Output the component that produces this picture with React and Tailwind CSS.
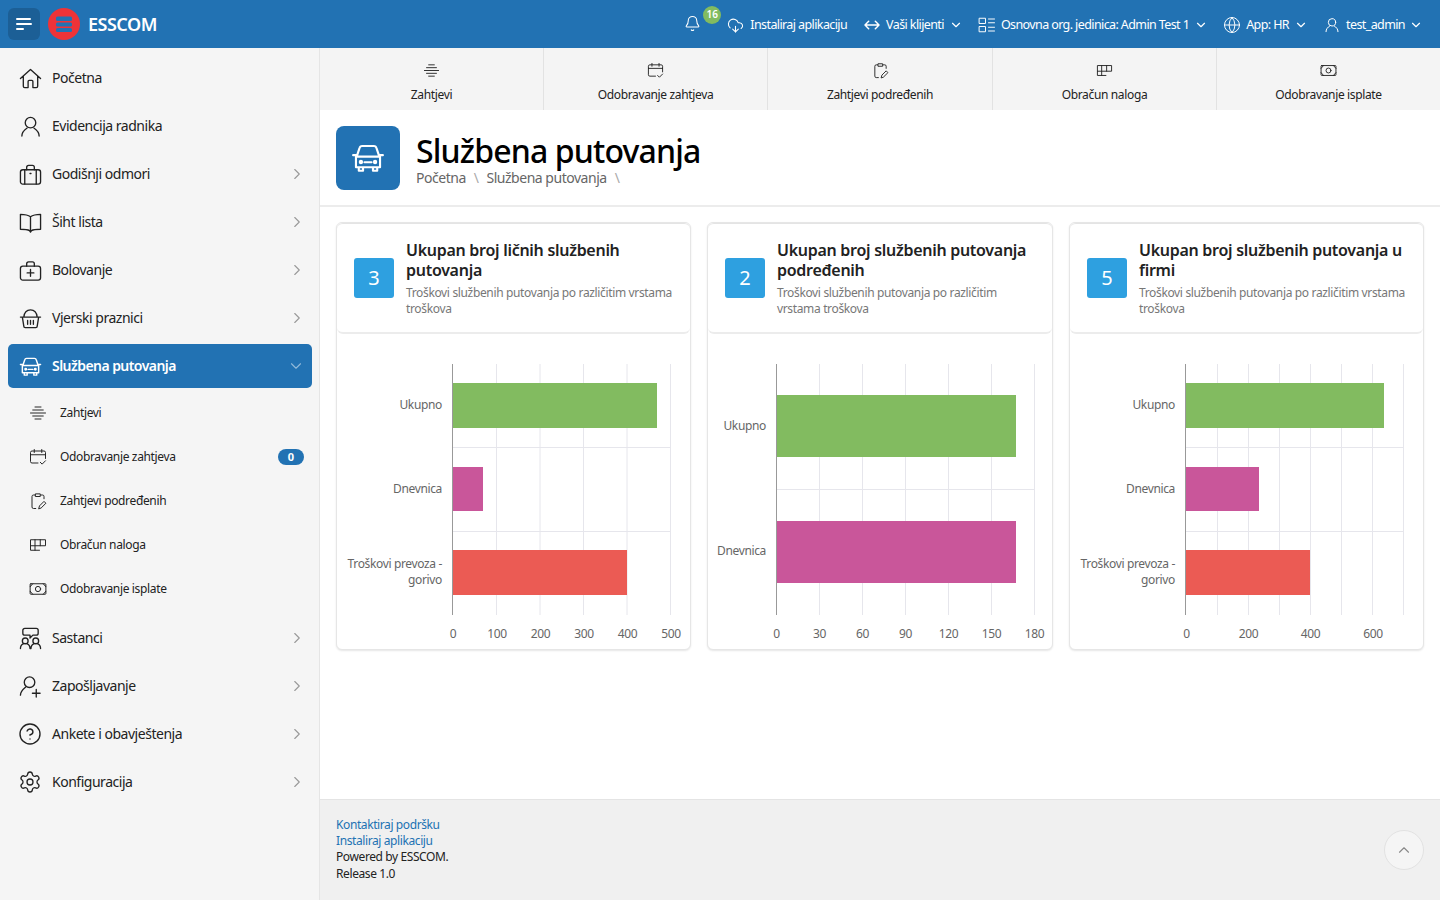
import { Bell, ChevronRight, ChevronDown, ChevronUp, CloudDownload, Globe, CircleHelp, Settings } from 'lucide-react'

const FONT = 'font-["Noto_Sans","Open_Sans",sans-serif]'

// Thin line icons drawn by hand, the packages don't have these shapes
function Ico({ size = 20, sw = 1.5, className = '', children }) {
  return (
    <svg width={size} height={size} viewBox="0 0 24 24" fill="none" stroke="currentColor" strokeWidth={sw}
      strokeLinecap="round" strokeLinejoin="round" className={`shrink-0 ${className}`}>
      {children}
    </svg>
  )
}

const HomeIcon = p => <Ico {...p}><path d="M1.500 12 12 2.500 22.500 12M4.500 9.500V20a1.500 1.500 0 0 0 1.500 1.500h3.500V15a1 1 0 0 1 1-1h3a1 1 0 0 1 1 1v6.500H18a1.500 1.500 0 0 0 1.500-1.500V9.500" /></Ico>
const UserIcon = p => <Ico {...p}><circle cx="12" cy="8" r="5.500" /><path d="M3 22c0-4 2.500-6.500 5.500-8.500M21 22c0-4-2.500-6.500-5.500-8.500" /></Ico>
const BagIcon = p => <Ico {...p}><rect x="1.500" y="7" width="21" height="15" rx="2.500" /><path d="M6 7v15M18 7v15M8 7V4.500A2 2 0 0 1 10 2.500h4a2 2 0 0 1 2 2V7M11.500 11h1" /></Ico>
const BookIcon = p => <Ico {...p}><path d="M12 6C10 4.500 6.500 3.500 1.500 3.500V19c4.500 0 8 .5 9.500 1.500l1 1.500 1-1.500c1.500-1 5-1.500 9.500-1.500V3.500C17.500 3.500 14 4.500 12 6ZM12 6v15" /></Ico>
const MedicalIcon = p => <Ico {...p}><rect x="1.500" y="7.500" width="21" height="14.500" rx="2.500" /><path d="M8 7.500V5a2 2 0 0 1 2-2h4a2 2 0 0 1 2 2v2.500M12 11v7M8.500 14.500h7" /></Ico>
const BasketIcon = p => <Ico {...p}><path d="M1.500 10.500h21M3.500 10.500 5 20a1.500 1.500 0 0 0 1.500 1.500h11A1.500 1.500 0 0 0 19 20l1.500-9.500M5 10.500C5.500 6 8 3 12 3s6.500 3 7 7.500M9 14v4M12 14v4M15 14v4" /></Ico>
const CarIcon = p => <Ico {...p}><path d="M4 11 6 5a2 2 0 0 1 2-1.500h8A2 2 0 0 1 18 5l2 6M1.500 10h2.500M20 10h2.500M3.500 11h17v7.500h-17zM5.500 18.500V21h3v-2.500M15.500 18.500V21h3v-2.500M9.500 15h5" /><circle cx="7" cy="14.800" r=".8" /><circle cx="17" cy="14.800" r=".8" /></Ico>
const LinesIcon = p => <Ico {...p}><path d="M8 4h8M5 8h14M2 12h20M5 16h14M8 20h8" /></Ico>
const CalCheckIcon = p => <Ico {...p}><path d="M12 20H4a2 2 0 0 1-2-2V6a2 2 0 0 1 2-2h16a2 2 0 0 1 2 2v8M2 9h20M7 2v4M17 2v4M15 19l2.500 2.500L22 17" /></Ico>
const ClipEditIcon = p => <Ico {...p}><path d="M8 4H6a2 2 0 0 0-2 2v14a2 2 0 0 0 2 2h3M16 4h2a2 2 0 0 1 2 2v3M9 2.500h6V6H9zM13 22l1-3.500 6-6 2.500 2.500-6 6z" /></Ico>
const TableIcon = p => <Ico {...p}><path d="M14 19H2V5h20v8H2M8 5v14M15 5v8" /></Ico>
const CashIcon = p => <Ico {...p}><rect x="1.500" y="5" width="21" height="14" rx="1" /><circle cx="12" cy="12" r="3.500" /><path d="M1.500 9 5 5M22.500 9 19 5M1.500 15 5 19M22.500 15 19 19" /></Ico>
const MeetingIcon = p => <Ico {...p}><path d="M6 1.500h12a2 2 0 0 1 2 2v3a2 2 0 0 1-2 2h-3.500L11.500 11.500V8.500H6a2 2 0 0 1-2-2v-3a2 2 0 0 1 2-2Z" /><circle cx="6.500" cy="14.500" r="3" /><circle cx="17.500" cy="14.500" r="3" /><path d="M1.500 22.500c0-2.500 1.500-4.500 3-5M11.500 22.500c0-2.500-1.500-4.500-3-5M12.500 22.500c0-2.500 1.500-4.500 3-5M22.500 22.500c0-2.500-1.500-4.500-3-5" /></Ico>
const UserPlusIcon = p => <Ico {...p}><circle cx="11" cy="7.500" r="5.500" /><path d="M1.500 21c0-3.500 2.500-6 5.500-8.500M18 15v8M14 19h8" /></Ico>
const TwoWayIcon = p => <Ico {...p}><path d="M2 12h20M7 6.500 1.500 12 7 17.500M17 6.500l5.500 5.500-5.500 5.500" /></Ico>
const OrgIcon = p => <Ico {...p}><path d="M2 3h8v7H2zM2 14h8v7H2zM14 4h8M14 9h8M14 15h8M14 20h8" /></Ico>

function CircleHelpIcon() {
  return <CircleHelp size={24} strokeWidth={1.4} className="shrink-0" />
}

function SettingsIcon() {
  return <Settings size={24} strokeWidth={1.3} className="shrink-0" />
}

const menu = [
  { label: 'Početna', icon: HomeIcon },
  { label: 'Evidencija radnika', icon: UserIcon },
  { label: 'Godišnji odmori', icon: BagIcon, more: true },
  { label: 'Šiht lista', icon: BookIcon, more: true },
  { label: 'Bolovanje', icon: MedicalIcon, more: true },
  { label: 'Vjerski praznici', icon: BasketIcon, more: true },
]

const menuBottom = [
  { label: 'Sastanci', icon: MeetingIcon, more: true },
  { label: 'Zapošljavanje', icon: UserPlusIcon, more: true },
  { label: 'Ankete i obavještenja', icon: CircleHelpIcon, more: true },
  { label: 'Konfiguracija', icon: SettingsIcon, more: true },
]

const subMenu = [
  { label: 'Zahtjevi', icon: LinesIcon },
  { label: 'Odobravanje zahtjeva', icon: CalCheckIcon, badge: 0 },
  { label: 'Zahtjevi podređenih', icon: ClipEditIcon },
  { label: 'Obračun naloga', icon: TableIcon },
  { label: 'Odobravanje isplate', icon: CashIcon },
]

const GREEN = '#82bb60'
const PINK = '#c9569a'
const RED = '#eb5b54'

const charts = [
  {
    count: 3,
    title: 'Ukupan broj ličnih službenih putovanja',
    sub: 'Troškovi službenih putovanja po različitim vrstama troškova',
    left: 337,
    width: 355,
    axis: 452.5,
    grid: [496.5, 540, 583.5, 627, 670.5],
    ticks: [[453, '0'], [497, '100'], [540.5, '200'], [584, '300'], [627.5, '400'], [671, '500']],
    rows: [447.5, 531.5],
    bars: [[383, 45, 657, GREEN], [467, 44, 483, PINK], [550, 45, 627, RED]],
    labels: [[['Ukupno'], 405], [['Dnevnica'], 489], [['Troškovi prevoza -', 'gorivo'], 564]],
  },
  {
    count: 2,
    title: 'Ukupan broj službenih putovanja podređenih',
    sub: 'Troškovi službenih putovanja po različitim vrstama troškova',
    left: 708,
    width: 346,
    axis: 776.5,
    grid: [819.5, 862.5, 905.5, 948.5, 991.5, 1034.5],
    ticks: [[776.5, '0'], [819.5, '30'], [862.5, '60'], [905.5, '90'], [948.5, '120'], [991.5, '150'], [1034.5, '180']],
    rows: [489.5],
    bars: [[395, 62, 1016, GREEN], [521, 62, 1016, PINK]],
    labels: [[['Ukupno'], 426], [['Dnevnica'], 551]],
  },
  {
    count: 5,
    title: 'Ukupan broj službenih putovanja u firmi',
    sub: 'Troškovi službenih putovanja po različitim vrstama troškova',
    left: 1070,
    width: 355,
    axis: 1185.5,
    grid: [1217.5, 1248.5, 1279.5, 1310.5, 1341.5, 1372.5, 1403.5],
    ticks: [[1186.5, '0'], [1248.5, '200'], [1310.5, '400'], [1373, '600']],
    rows: [447.5, 531.5],
    bars: [[383, 45, 1384, GREEN], [467, 44, 1259, PINK], [550, 45, 1310, RED]],
    labels: [[['Ukupno'], 405], [['Dnevnica'], 489], [['Troškovi prevoza -', 'gorivo'], 564]],
  },
]

function Chart({ c }) {
  // coordinates below are page numbers, viewBox shifts them into the card
  const labelX = c.axis - 10.5
  return (
    <svg width={c.width - 2} height={315} viewBox={`${c.left} 334 ${c.width - 2} 315`} className="block">
      {c.grid.map(x => <line key={x} x1={x} x2={x} y1={364} y2={615} stroke="#e6e6ec" />)}
      {c.rows.map(y => <line key={y} x1={c.axis} x2={c.grid[c.grid.length - 1]} y1={y} y2={y} stroke="#e6e6ec" />)}
      {c.bars.map(([y, h, x2, color]) => <rect key={y} x={c.axis} y={y} width={x2 - c.axis} height={h} fill={color} />)}
      <line x1={c.axis} x2={c.axis} y1={364} y2={615} stroke="#999" />
      {c.labels.map(([lines, y]) => lines.map((t, i) => (
        <text key={t} x={labelX} y={y + i * 16 + 4} textAnchor="end" fill="#666" fontSize="12" letterSpacing="-0.35">{t}</text>
      )))}
      {c.ticks.map(([x, t]) => (
        <text key={t} x={x} y={638} textAnchor="middle" fill="#666" fontSize="12" letterSpacing="-0.3">{t}</text>
      ))}
    </svg>
  )
}

function StatCard({ c }) {
  return (
    <div className="flex flex-col h-[428px] rounded-md border border-[#e6e6e6] shadow-[0_1px_2px_rgba(0,0,0,0.1)] bg-white">
      <div className="flex items-center gap-3 h-[111px] pl-[17px] pr-[15px] rounded-md border-t border-[#e4e4e4] border-b-2 border-b-[#ececec]">
        <div className="w-10 h-10 shrink-0 rounded-[3px] bg-[#2ea0e0] text-white text-xl flex items-center justify-center">{c.count}</div>
        <div className="min-w-0 pt-[1px]">
          <div className="text-base font-semibold leading-5 text-[#222] tracking-[-0.28px]">{c.title}</div>
          <div className="mt-[5px] text-xs leading-4 text-[#777] tracking-[-0.35px]">{c.sub}</div>
        </div>
      </div>
      <Chart c={c} />
    </div>
  )
}

function SideRow({ item }) {
  const Icon = item.icon
  return (
    <div className="flex items-center h-12 pl-5 pr-[13px] text-[#222] text-sm tracking-[-0.48px]">
      <span className="w-5 flex justify-center"><Icon size={23} sw={1.4} /></span>
      <span className="ml-3 flex-1">{item.label}</span>
      {item.more && <ChevronRight size={18} strokeWidth={1.5} className="text-[#999]" />}
    </div>
  )
}

export default function App() {
  return (
    <div className={`${FONT} w-[1440px] h-[900px] overflow-hidden flex flex-col bg-white`}>
      {/* Top bar */}
      <header className="h-12 shrink-0 bg-[#2272b3] text-white flex items-center pl-2 pr-[17px]">
        <button className="w-8 h-8 rounded-md bg-[#1c5f96] flex flex-col justify-center gap-[2.5px] pl-2">
          <span className="block w-[15px] h-[2.5px] rounded bg-white" />
          <span className="block w-4 h-[2.5px] rounded bg-white" />
          <span className="block w-2 h-[2.5px] rounded bg-white" />
        </button>
        <svg width="32" height="32" viewBox="0 0 32 32" className="ml-2 shrink-0">
          <circle cx="16" cy="16" r="16" fill="#ee3338" />
          <rect x="8" y="8.500" width="16" height="4.500" rx="1.500" fill="#2272b3" />
          <rect x="8" y="14.500" width="16" height="4" rx="1.500" fill="#2272b3" />
          <rect x="8" y="20" width="16" height="4" rx="1.500" fill="#2272b3" />
        </svg>
        <span className="ml-2 text-lg font-semibold tracking-[-0.5px]">ESSCOM</span>

        <div className="ml-auto flex items-center pt-[2px] text-[12.5px] tracking-[-0.6px]">
          <div className="relative mr-[26px] -mt-[4px]">
            <Bell size={17} strokeWidth={1.5} />
            <span className="absolute -top-[9px] left-[19px] w-[18px] h-[18px] rounded-full bg-[#82bb60] text-[10px] font-semibold tracking-normal flex items-center justify-center">16</span>
          </div>
          <CloudDownload size={17} strokeWidth={1.5} />
          <span className="ml-[6px]">Instaliraj aplikaciju</span>
          <TwoWayIcon size={16} sw={2.2} className="ml-[17px]" />
          <span className="ml-[6px]">Vaši klijenti</span>
          <ChevronDown size={14} strokeWidth={2} className="ml-[5px]" />
          <OrgIcon size={18} sw={1.3} className="ml-[15px]" />
          <span className="ml-[5px]">Osnovna org. jedinica: Admin Test 1</span>
          <ChevronDown size={14} strokeWidth={2} className="ml-[5px]" />
          <Globe size={18} strokeWidth={1.3} className="ml-[15px]" />
          <span className="ml-[5px]">App: HR</span>
          <ChevronDown size={14} strokeWidth={2} className="ml-[5px]" />
          <UserIcon size={16} className="ml-[16px]" />
          <span className="ml-[6px]">test_admin</span>
          <ChevronDown size={14} strokeWidth={2} className="ml-[4px]" />
        </div>
      </header>

      <div className="flex flex-1 min-h-0">
        {/* Sidebar */}
        <aside className="w-80 shrink-0 bg-[#f5f5f5] border-r border-[#e5e5e5] pt-[6px]">
          {menu.map(item => <SideRow key={item.label} item={item} />)}

          <div className="ml-2 mr-[7px] my-[2px] h-11 rounded-[5px] bg-[#2272b3] text-white flex items-center pl-3 pr-[7px] text-sm font-semibold tracking-[-0.55px]">
            <span className="w-5 flex justify-center"><CarIcon size={23} sw={1.5} /></span>
            <span className="ml-3 flex-1">Službena putovanja</span>
            <ChevronDown size={18} strokeWidth={1.5} className="text-white/50" />
          </div>

          <div className="mb-1">
            {subMenu.map(item => {
              const Icon = item.icon
              return (
                <div key={item.label} className="flex items-center h-11 pl-[29px] pr-[15px] pt-[2px] text-xs text-[#222] tracking-[-0.35px]">
                  <Icon size={18} sw={1.3} />
                  <span className="ml-[13px] flex-1">{item.label}</span>
                  {item.badge !== undefined && (
                    <span className="w-[26px] h-4 rounded-full bg-[#2272b3] text-white text-[11px] font-bold tracking-normal flex items-center justify-center">{item.badge}</span>
                  )}
                </div>
              )
            })}
          </div>

          {menuBottom.map(item => <SideRow key={item.label} item={item} />)}
        </aside>

        {/* Main */}
        <main className="flex-1 min-w-0 flex flex-col">
          <nav className="h-[62px] shrink-0 grid grid-cols-[224px_224px_225px_224px_1fr] bg-[#f4f4f4]">
            {subMenu.map((item, i) => {
              const Icon = item.icon
              return (
                <div key={item.label} className={`flex flex-col items-center pt-[14px] text-xs text-[#222] tracking-[-0.35px] ${i < 4 ? 'border-r border-[#e2e2e2]' : ''}`}>
                  <Icon size={17} sw={1.3} />
                  <span className="mt-[8px] leading-4">{item.label}</span>
                </div>
              )
            })}
          </nav>

          <div className="h-[97px] shrink-0 flex items-center gap-4 px-4 border-b-2 border-[#ececec]">
            <div className="w-16 h-16 rounded-lg bg-[#2272b3] text-white flex items-center justify-center">
              <CarIcon size={34} sw={1.5} />
            </div>
            <div className="pt-[5px]">
              <h1 className="text-[32px] leading-9 text-black tracking-[-0.85px] font-medium">Službena putovanja</h1>
              <div className="-mt-[1px] flex items-center gap-2 text-sm leading-5 text-[#666] tracking-[-0.48px]">
                <span>Početna</span>
                <span className="text-[#aaa]">\</span>
                <span>Službena putovanja</span>
                <span className="text-[#aaa]">\</span>
              </div>
            </div>
          </div>

          <div className="grid grid-cols-[355px_346px_355px] gap-4 px-4 pt-[15px]">
            {charts.map(c => <StatCard key={c.count} c={c} />)}
          </div>

          <footer className="relative mt-auto h-[101px] shrink-0 bg-[#f0f0f0] border-t border-[#e4e4e4] pl-4 pt-[17px] text-xs leading-4 text-[#222] tracking-[-0.4px]">
            <div className="text-[#2272b3]">Kontaktiraj podršku</div>
            <div className="text-[#2272b3]">Instaliraj aplikaciju</div>
            <div>Powered by ESSCOM.</div>
            <div className="mt-[1px]">Release 1.0</div>
            <button className="absolute right-[16px] top-[30px] w-10 h-10 rounded-full bg-[#f5f5f5] border border-[#e2e2e2] flex items-center justify-center text-[#888]">
              <ChevronUp size={18} strokeWidth={1.5} />
            </button>
          </footer>
        </main>
      </div>
    </div>
  )
}
